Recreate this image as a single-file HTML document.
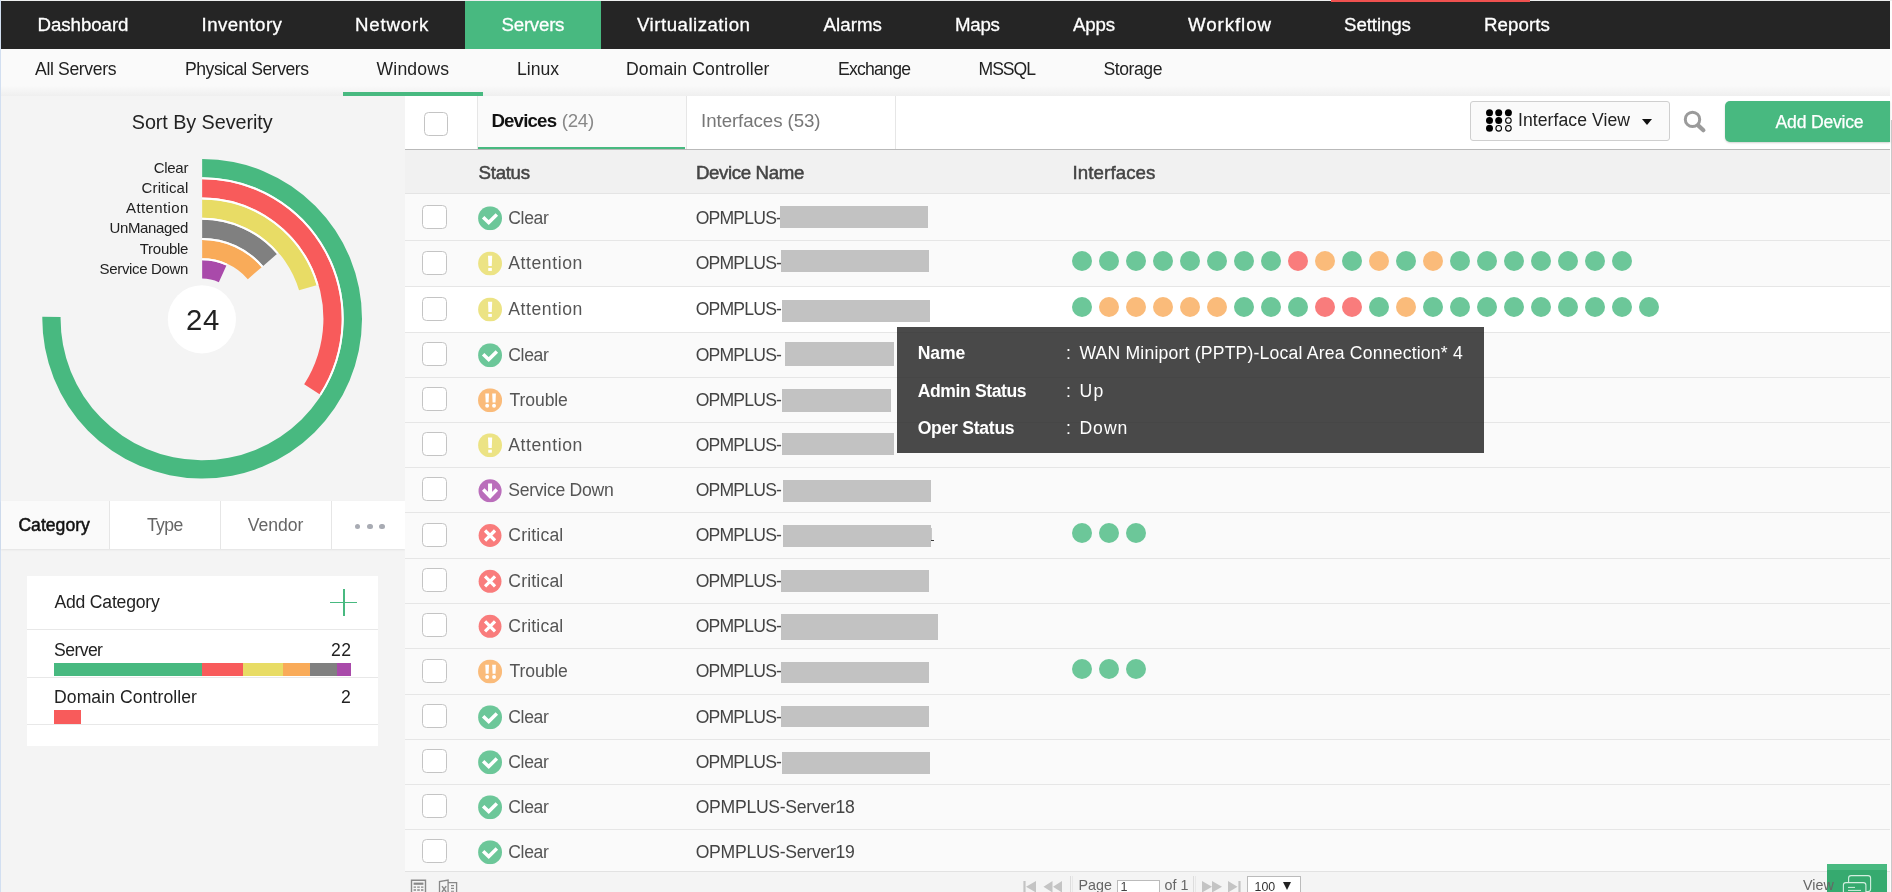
<!DOCTYPE html>
<html lang="en"><head><meta charset="utf-8"><title>OpManager - Servers - Windows</title>
<style>
html,body{margin:0;padding:0;background:#f4f4f4;}
body{width:1892px;height:892px;position:relative;overflow:hidden;font-family:'Liberation Sans',sans-serif;}
.b{position:absolute;display:block}
.t{position:absolute;display:block;white-space:pre;line-height:24px;height:24px;font-family:'Liberation Sans',sans-serif;}
#tx,#ov{position:absolute;left:0;top:0;width:1892px;height:892px;will-change:transform}
</style></head><body>
<div class="b" style="left:0.00px;top:0.00px;width:1892.00px;height:892.00px;background:#f4f4f4;"></div>
<div class="b" style="left:0.00px;top:0.00px;width:1.00px;height:892.00px;background:#d2dff1;"></div>
<div class="b" style="left:1890.00px;top:0.00px;width:2.00px;height:892.00px;background:#fdfdfd;"></div>
<div class="b" style="left:1891.00px;top:120.00px;width:1.00px;height:772.00px;background:#c9c9c9;"></div>
<div class="b" style="left:1.00px;top:1.00px;width:1889.00px;height:48.00px;background:#252525;"></div>
<div class="b" style="left:1.00px;top:0.00px;width:1891.00px;height:1.00px;background:#eef0f0;"></div>
<div class="b" style="left:1331.00px;top:0.00px;width:199.00px;height:1.50px;background:#f0514f;"></div>
<div class="b" style="left:465.00px;top:1.00px;width:136.00px;height:48.00px;background:#48b980;"></div>
<div class="b" style="left:1.00px;top:49.00px;width:1889.00px;height:47.00px;background:#fafafa;background:linear-gradient(#fafafa 0,#fafafa 78%,#efefef 100%);"></div>
<div class="b" style="left:343.00px;top:92.00px;width:140.00px;height:4.00px;background:#48b980;"></div>
<div class="b" style="left:1.00px;top:96.00px;width:404.00px;height:796.00px;background:#f4f4f4;"></div>
<svg class="b" style="left:0;top:96px" width="405" height="400" viewBox="0 96 405 400"><path d="M202.15 158.90A159.85 159.85 0 1 1 42.31 316.80L60.61 317.02A141.55 141.55 0 1 0 202.15 177.20Z" fill="#48b980"/><path d="M202.15 179.18A139.57 139.57 0 0 1 319.56 394.21L304.17 384.31A121.27 121.27 0 0 0 202.15 197.48Z" fill="#f85b5b"/><path d="M202.15 178.19A140.56 140.56 0 0 1 320.40 394.74" fill="none" stroke="#fff" stroke-width="1.9"/><path d="M202.15 199.46A119.29 119.29 0 0 1 316.61 285.14L299.05 290.30A100.99 100.99 0 0 0 202.15 217.76Z" fill="#e8dc65"/><path d="M202.15 198.47A120.28 120.28 0 0 1 317.56 284.86" fill="none" stroke="#fff" stroke-width="1.9"/><path d="M202.15 219.74A99.01 99.01 0 0 1 276.98 253.91L263.15 265.90A80.71 80.71 0 0 0 202.15 238.04Z" fill="#808080"/><path d="M202.15 218.75A100.00 100.00 0 0 1 277.72 253.26" fill="none" stroke="#fff" stroke-width="1.9"/><path d="M202.15 240.02A78.73 78.73 0 0 1 261.65 267.19L247.82 279.18A60.43 60.43 0 0 0 202.15 258.32Z" fill="#f9ab59"/><path d="M202.15 239.03A79.72 79.72 0 0 1 262.40 266.54" fill="none" stroke="#fff" stroke-width="1.9"/><path d="M202.15 260.30A58.45 58.45 0 0 1 226.43 265.58L218.83 282.23A40.15 40.15 0 0 0 202.15 278.60Z" fill="#a94aaa"/><path d="M202.15 259.31A59.44 59.44 0 0 1 226.84 264.68" fill="none" stroke="#fff" stroke-width="1.9"/><circle cx="201.9" cy="319.3" r="34.1" fill="#fff"/></svg>
<div class="b" style="left:1.00px;top:501.00px;width:404.00px;height:48.00px;background:#fff;box-shadow:0 1px 2px rgba(0,0,0,.07);"></div>
<div class="b" style="left:1.00px;top:501.00px;width:109.00px;height:48.00px;background:#fafafa;"></div>
<div class="b" style="left:109.30px;top:501.00px;width:1.00px;height:48.00px;background:#e6e6e6;"></div>
<div class="b" style="left:220.00px;top:501.00px;width:1.00px;height:48.00px;background:#e6e6e6;"></div>
<div class="b" style="left:331.00px;top:501.00px;width:1.00px;height:48.00px;background:#e6e6e6;"></div>
<div class="b" style="left:354.6px;top:523.6px;width:5.8px;height:5.8px;border-radius:50%;background:#a8abb3"></div>
<div class="b" style="left:367.0px;top:523.6px;width:5.8px;height:5.8px;border-radius:50%;background:#a8abb3"></div>
<div class="b" style="left:379.4px;top:523.6px;width:5.8px;height:5.8px;border-radius:50%;background:#a8abb3"></div>
<div class="b" style="left:27.00px;top:576.00px;width:351.00px;height:170.00px;background:#fff;"></div>
<div class="b" style="left:27.00px;top:629.00px;width:351.00px;height:1.00px;background:#e8e8e8;"></div>
<div class="b" style="left:27.00px;top:677.00px;width:351.00px;height:1.00px;background:#e8e8e8;"></div>
<div class="b" style="left:27.00px;top:724.00px;width:351.00px;height:1.00px;background:#e8e8e8;"></div>
<div class="b" style="left:330.30px;top:602.00px;width:26.80px;height:1.20px;background:#48b980;"></div>
<div class="b" style="left:343.40px;top:589.00px;width:1.60px;height:27.00px;background:#48b980;"></div>
<div class="b" style="left:54.00px;top:663.00px;width:147.90px;height:12.80px;background:#48b980;"></div>
<div class="b" style="left:201.90px;top:663.00px;width:40.90px;height:12.80px;background:#f85b5b;"></div>
<div class="b" style="left:242.80px;top:663.00px;width:40.10px;height:12.80px;background:#e8dc65;"></div>
<div class="b" style="left:282.90px;top:663.00px;width:27.00px;height:12.80px;background:#f9ab59;"></div>
<div class="b" style="left:309.90px;top:663.00px;width:27.00px;height:12.80px;background:#808080;"></div>
<div class="b" style="left:336.90px;top:663.00px;width:14.10px;height:12.80px;background:#a94aaa;"></div>
<div class="b" style="left:54.00px;top:710.00px;width:27.00px;height:13.80px;background:#f85b5b;"></div>
<div class="b" style="left:405.00px;top:96.00px;width:1485.00px;height:796.00px;background:#fafafa;"></div>
<div class="b" style="left:405.00px;top:96.00px;width:1485.00px;height:53.00px;background:#fff;"></div>
<div class="b" style="left:405.00px;top:149.00px;width:1485.00px;height:1.00px;background:#b9b9b9;"></div>
<div class="b" style="left:476.50px;top:96.00px;width:1.00px;height:53.00px;background:#e6e6e6;"></div>
<div class="b" style="left:477.50px;top:96.00px;width:208.00px;height:53.00px;background:#fafafa;"></div>
<div class="b" style="left:477.50px;top:147.00px;width:207.50px;height:2.40px;background:#48b980;"></div>
<div class="b" style="left:685.50px;top:96.00px;width:1.00px;height:53.00px;background:#e6e6e6;"></div>
<div class="b" style="left:895.00px;top:96.00px;width:1.00px;height:53.00px;background:#e6e6e6;"></div>
<div class="b" style="left:424.2px;top:112.2px;width:23.5px;height:23.5px;box-sizing:border-box;border:1px solid #c4c4c4;border-radius:4.5px;background:#fff"></div>
<div class="b" style="left:1470px;top:101px;width:200px;height:40px;box-sizing:border-box;border:1px solid #cfcfcf;border-radius:3px;background:#fafafa"></div>
<div class="b" style="left:1642px;top:119.3px;width:0;height:0;border-left:5.7px solid transparent;border-right:5.7px solid transparent;border-top:6.6px solid #111"></div>
<div class="b" style="left:1725px;top:101px;width:165px;height:41px;border-radius:5px 0 0 5px;background:#48b980;box-shadow:0 1px 2px rgba(0,0,0,.18)"></div>
<div class="b" style="left:405.00px;top:150.00px;width:1485.00px;height:43.00px;background:#f1f1f1;"></div>
<div class="b" style="left:405.00px;top:193.00px;width:1485.00px;height:1.00px;background:#e4e4e4;"></div>
<div class="b" style="left:405.00px;top:287.00px;width:1485.00px;height:45.00px;background:#fff;"></div>
<div class="b" style="left:405.00px;top:240.00px;width:1485.00px;height:1.00px;background:#e6e6e6;"></div>
<div class="b" style="left:405.00px;top:286.00px;width:1485.00px;height:1.00px;background:#e6e6e6;"></div>
<div class="b" style="left:405.00px;top:332.00px;width:1485.00px;height:1.00px;background:#e6e6e6;"></div>
<div class="b" style="left:405.00px;top:377.00px;width:1485.00px;height:1.00px;background:#e6e6e6;"></div>
<div class="b" style="left:405.00px;top:422.00px;width:1485.00px;height:1.00px;background:#e6e6e6;"></div>
<div class="b" style="left:405.00px;top:467.00px;width:1485.00px;height:1.00px;background:#e6e6e6;"></div>
<div class="b" style="left:405.00px;top:512.00px;width:1485.00px;height:1.00px;background:#e6e6e6;"></div>
<div class="b" style="left:405.00px;top:558.00px;width:1485.00px;height:1.00px;background:#e6e6e6;"></div>
<div class="b" style="left:405.00px;top:603.00px;width:1485.00px;height:1.00px;background:#e6e6e6;"></div>
<div class="b" style="left:405.00px;top:648.00px;width:1485.00px;height:1.00px;background:#e6e6e6;"></div>
<div class="b" style="left:405.00px;top:694.00px;width:1485.00px;height:1.00px;background:#e6e6e6;"></div>
<div class="b" style="left:405.00px;top:739.00px;width:1485.00px;height:1.00px;background:#e6e6e6;"></div>
<div class="b" style="left:405.00px;top:784.00px;width:1485.00px;height:1.00px;background:#e6e6e6;"></div>
<div class="b" style="left:405.00px;top:829.00px;width:1485.00px;height:1.00px;background:#e6e6e6;"></div>
<div class="b" style="left:422.2px;top:205.1px;width:24.4px;height:24.4px;box-sizing:border-box;border:1px solid #c4c4c4;border-radius:4.5px;background:#fff"></div>
<div class="b" style="left:422.2px;top:250.6px;width:24.4px;height:24.4px;box-sizing:border-box;border:1px solid #c4c4c4;border-radius:4.5px;background:#fff"></div>
<div class="b" style="left:422.2px;top:296.6px;width:24.4px;height:24.4px;box-sizing:border-box;border:1px solid #c4c4c4;border-radius:4.5px;background:#fff"></div>
<div class="b" style="left:422.2px;top:342.1px;width:24.4px;height:24.4px;box-sizing:border-box;border:1px solid #c4c4c4;border-radius:4.5px;background:#fff"></div>
<div class="b" style="left:422.2px;top:387.1px;width:24.4px;height:24.4px;box-sizing:border-box;border:1px solid #c4c4c4;border-radius:4.5px;background:#fff"></div>
<div class="b" style="left:422.2px;top:432.1px;width:24.4px;height:24.4px;box-sizing:border-box;border:1px solid #c4c4c4;border-radius:4.5px;background:#fff"></div>
<div class="b" style="left:422.2px;top:477.1px;width:24.4px;height:24.4px;box-sizing:border-box;border:1px solid #c4c4c4;border-radius:4.5px;background:#fff"></div>
<div class="b" style="left:422.2px;top:522.6px;width:24.4px;height:24.4px;box-sizing:border-box;border:1px solid #c4c4c4;border-radius:4.5px;background:#fff"></div>
<div class="b" style="left:931.00px;top:528.00px;width:1.00px;height:11.50px;background:#c8c8c8;"></div>
<div class="b" style="left:931.00px;top:540.00px;width:3.00px;height:1.40px;background:#3c3c3c;"></div>
<div class="b" style="left:422.2px;top:568.1px;width:24.4px;height:24.4px;box-sizing:border-box;border:1px solid #c4c4c4;border-radius:4.5px;background:#fff"></div>
<div class="b" style="left:422.2px;top:613.1px;width:24.4px;height:24.4px;box-sizing:border-box;border:1px solid #c4c4c4;border-radius:4.5px;background:#fff"></div>
<div class="b" style="left:422.2px;top:658.6px;width:24.4px;height:24.4px;box-sizing:border-box;border:1px solid #c4c4c4;border-radius:4.5px;background:#fff"></div>
<div class="b" style="left:422.2px;top:704.1px;width:24.4px;height:24.4px;box-sizing:border-box;border:1px solid #c4c4c4;border-radius:4.5px;background:#fff"></div>
<div class="b" style="left:422.2px;top:749.1px;width:24.4px;height:24.4px;box-sizing:border-box;border:1px solid #c4c4c4;border-radius:4.5px;background:#fff"></div>
<div class="b" style="left:422.2px;top:794.1px;width:24.4px;height:24.4px;box-sizing:border-box;border:1px solid #c4c4c4;border-radius:4.5px;background:#fff"></div>
<div class="b" style="left:422.2px;top:839.1px;width:24.4px;height:24.4px;box-sizing:border-box;border:1px solid #c4c4c4;border-radius:4.5px;background:#fff"></div>
<div class="b" style="left:1072.0px;top:251.2px;width:20px;height:20px;border-radius:50%;background:#6cc799"></div>
<div class="b" style="left:1099.0px;top:251.2px;width:20px;height:20px;border-radius:50%;background:#6cc799"></div>
<div class="b" style="left:1126.0px;top:251.2px;width:20px;height:20px;border-radius:50%;background:#6cc799"></div>
<div class="b" style="left:1153.0px;top:251.2px;width:20px;height:20px;border-radius:50%;background:#6cc799"></div>
<div class="b" style="left:1180.0px;top:251.2px;width:20px;height:20px;border-radius:50%;background:#6cc799"></div>
<div class="b" style="left:1207.0px;top:251.2px;width:20px;height:20px;border-radius:50%;background:#6cc799"></div>
<div class="b" style="left:1234.0px;top:251.2px;width:20px;height:20px;border-radius:50%;background:#6cc799"></div>
<div class="b" style="left:1261.0px;top:251.2px;width:20px;height:20px;border-radius:50%;background:#6cc799"></div>
<div class="b" style="left:1288.0px;top:251.2px;width:20px;height:20px;border-radius:50%;background:#f97c7c"></div>
<div class="b" style="left:1315.0px;top:251.2px;width:20px;height:20px;border-radius:50%;background:#fabb7a"></div>
<div class="b" style="left:1342.0px;top:251.2px;width:20px;height:20px;border-radius:50%;background:#6cc799"></div>
<div class="b" style="left:1369.0px;top:251.2px;width:20px;height:20px;border-radius:50%;background:#fabb7a"></div>
<div class="b" style="left:1396.0px;top:251.2px;width:20px;height:20px;border-radius:50%;background:#6cc799"></div>
<div class="b" style="left:1423.0px;top:251.2px;width:20px;height:20px;border-radius:50%;background:#fabb7a"></div>
<div class="b" style="left:1450.0px;top:251.2px;width:20px;height:20px;border-radius:50%;background:#6cc799"></div>
<div class="b" style="left:1477.0px;top:251.2px;width:20px;height:20px;border-radius:50%;background:#6cc799"></div>
<div class="b" style="left:1504.0px;top:251.2px;width:20px;height:20px;border-radius:50%;background:#6cc799"></div>
<div class="b" style="left:1531.0px;top:251.2px;width:20px;height:20px;border-radius:50%;background:#6cc799"></div>
<div class="b" style="left:1558.0px;top:251.2px;width:20px;height:20px;border-radius:50%;background:#6cc799"></div>
<div class="b" style="left:1585.0px;top:251.2px;width:20px;height:20px;border-radius:50%;background:#6cc799"></div>
<div class="b" style="left:1612.0px;top:251.2px;width:20px;height:20px;border-radius:50%;background:#6cc799"></div>
<div class="b" style="left:1072.0px;top:297.2px;width:20px;height:20px;border-radius:50%;background:#6cc799"></div>
<div class="b" style="left:1099.0px;top:297.2px;width:20px;height:20px;border-radius:50%;background:#fabb7a"></div>
<div class="b" style="left:1126.0px;top:297.2px;width:20px;height:20px;border-radius:50%;background:#fabb7a"></div>
<div class="b" style="left:1153.0px;top:297.2px;width:20px;height:20px;border-radius:50%;background:#fabb7a"></div>
<div class="b" style="left:1180.0px;top:297.2px;width:20px;height:20px;border-radius:50%;background:#fabb7a"></div>
<div class="b" style="left:1207.0px;top:297.2px;width:20px;height:20px;border-radius:50%;background:#fabb7a"></div>
<div class="b" style="left:1234.0px;top:297.2px;width:20px;height:20px;border-radius:50%;background:#6cc799"></div>
<div class="b" style="left:1261.0px;top:297.2px;width:20px;height:20px;border-radius:50%;background:#6cc799"></div>
<div class="b" style="left:1288.0px;top:297.2px;width:20px;height:20px;border-radius:50%;background:#6cc799"></div>
<div class="b" style="left:1315.0px;top:297.2px;width:20px;height:20px;border-radius:50%;background:#f97c7c"></div>
<div class="b" style="left:1342.0px;top:297.2px;width:20px;height:20px;border-radius:50%;background:#f97c7c"></div>
<div class="b" style="left:1369.0px;top:297.2px;width:20px;height:20px;border-radius:50%;background:#6cc799"></div>
<div class="b" style="left:1396.0px;top:297.2px;width:20px;height:20px;border-radius:50%;background:#fabb7a"></div>
<div class="b" style="left:1423.0px;top:297.2px;width:20px;height:20px;border-radius:50%;background:#6cc799"></div>
<div class="b" style="left:1450.0px;top:297.2px;width:20px;height:20px;border-radius:50%;background:#6cc799"></div>
<div class="b" style="left:1477.0px;top:297.2px;width:20px;height:20px;border-radius:50%;background:#6cc799"></div>
<div class="b" style="left:1504.0px;top:297.2px;width:20px;height:20px;border-radius:50%;background:#6cc799"></div>
<div class="b" style="left:1531.0px;top:297.2px;width:20px;height:20px;border-radius:50%;background:#6cc799"></div>
<div class="b" style="left:1558.0px;top:297.2px;width:20px;height:20px;border-radius:50%;background:#6cc799"></div>
<div class="b" style="left:1585.0px;top:297.2px;width:20px;height:20px;border-radius:50%;background:#6cc799"></div>
<div class="b" style="left:1612.0px;top:297.2px;width:20px;height:20px;border-radius:50%;background:#6cc799"></div>
<div class="b" style="left:1639.0px;top:297.2px;width:20px;height:20px;border-radius:50%;background:#6cc799"></div>
<div class="b" style="left:1072.0px;top:523.2px;width:20px;height:20px;border-radius:50%;background:#6cc799"></div>
<div class="b" style="left:1099.0px;top:523.2px;width:20px;height:20px;border-radius:50%;background:#6cc799"></div>
<div class="b" style="left:1126.0px;top:523.2px;width:20px;height:20px;border-radius:50%;background:#6cc799"></div>
<div class="b" style="left:1072.0px;top:659.2px;width:20px;height:20px;border-radius:50%;background:#6cc799"></div>
<div class="b" style="left:1099.0px;top:659.2px;width:20px;height:20px;border-radius:50%;background:#6cc799"></div>
<div class="b" style="left:1126.0px;top:659.2px;width:20px;height:20px;border-radius:50%;background:#6cc799"></div>
<div class="b" style="left:405.00px;top:871.00px;width:1485.00px;height:21.00px;background:#f4f4f4;"></div>
<div class="b" style="left:405.00px;top:870.50px;width:1485.00px;height:1.00px;background:#e2e2e2;"></div>
<div class="b" style="left:1070.00px;top:876.00px;width:1.00px;height:16.00px;background:#ddd;"></div>
<div class="b" style="left:1071.50px;top:876.00px;width:1.00px;height:16.00px;background:#e8e8e8;"></div>
<div class="b" style="left:1117px;top:879.5px;width:43px;height:16px;box-sizing:border-box;border:1px solid #bbb;background:#fff"></div>
<div class="b" style="left:1193.00px;top:876.00px;width:1.00px;height:16.00px;background:#ddd;"></div>
<div class="b" style="left:1194.50px;top:876.00px;width:1.00px;height:16.00px;background:#e8e8e8;"></div>
<div class="b" style="left:1247px;top:875.5px;width:54px;height:20px;box-sizing:border-box;border:1px solid #bbb;background:#fff"></div>
<div class="b" style="left:1282.5px;top:882.2px;width:0;height:0;border-left:4.5px solid transparent;border-right:4.5px solid transparent;border-top:8.5px solid #222"></div>
<div class="b" style="left:1827.00px;top:864.00px;width:60.00px;height:28.00px;background:#36aa6f;"></div>
<div class="b" style="left:1827.00px;top:864.00px;width:60.00px;height:6.00px;background:#48b980;"></div>
<svg class="b" style="left:0;top:0" width="1892" height="892" viewBox="0 0 1892 892">
<svg x="1484" y="107" width="30" height="27" viewBox="1484 107 30 27"><circle cx="1489.5" cy="112.7" r="3.5" fill="#000"/><circle cx="1498.7" cy="112.7" r="3.5" fill="#000"/><circle cx="1508.4" cy="112.7" r="3.5" fill="#000"/><circle cx="1489.5" cy="120.5" r="3.5" fill="#000"/><circle cx="1498.7" cy="120.5" r="3.5" fill="#000"/><circle cx="1508.4" cy="120.5" r="2.8" fill="none" stroke="#000" stroke-width="1.1"/><circle cx="1489.5" cy="128.3" r="3.5" fill="#000"/><circle cx="1498.7" cy="128.3" r="2.8" fill="none" stroke="#000" stroke-width="1.1"/><circle cx="1508.4" cy="128.3" r="2.8" fill="none" stroke="#000" stroke-width="1.1"/></svg>
<svg x="1680" y="106" width="30" height="30" viewBox="1680 106 30 30"><circle cx="1692.5" cy="119.4" r="7.2" fill="none" stroke="#9b9b9b" stroke-width="3"/><path d="M1698.4 125.6L1703.4 130.2" stroke="#9b9b9b" stroke-width="4.2" stroke-linecap="round"/></svg>
<svg x="478.05" y="206.30" width="24" height="24" viewBox="0 0 24 24"><circle cx="12" cy="12" r="11.95" fill="#6cc799"/><path d="M5.1 11.05L10.65 16.3L18.8 8.2" fill="none" stroke="#fff" stroke-width="3.5" stroke-linejoin="miter"/></svg>
<svg x="478.05" y="251.50" width="24" height="24" viewBox="0 0 24 24"><circle cx="12" cy="12" r="11.95" fill="#ece384"/><path d="M9.95 4.3h4.2l-.45 10.3h-3.3z" fill="#fff"/><rect x="10.2" y="16.4" width="3.6" height="3" fill="#fff"/></svg>
<svg x="478.05" y="297.50" width="24" height="24" viewBox="0 0 24 24"><circle cx="12" cy="12" r="11.95" fill="#ece384"/><path d="M9.95 4.3h4.2l-.45 10.3h-3.3z" fill="#fff"/><rect x="10.2" y="16.4" width="3.6" height="3" fill="#fff"/></svg>
<svg x="478.05" y="343.30" width="24" height="24" viewBox="0 0 24 24"><circle cx="12" cy="12" r="11.95" fill="#6cc799"/><path d="M5.1 11.05L10.65 16.3L18.8 8.2" fill="none" stroke="#fff" stroke-width="3.5" stroke-linejoin="miter"/></svg>
<svg x="478.05" y="388.30" width="24" height="24" viewBox="0 0 24 24"><circle cx="12" cy="12" r="12.05" fill="#fabb7a"/><path d="M7.25 5.2h3.7l-.4 9h-2.9z" fill="#fff"/><circle cx="9.1" cy="17.5" r="1.95" fill="#fff"/><path d="M14.15 5.2h3.7l-.4 9h-2.9z" fill="#fff"/><circle cx="16" cy="17.5" r="1.95" fill="#fff"/></svg>
<svg x="478.05" y="433.30" width="24" height="24" viewBox="0 0 24 24"><circle cx="12" cy="12" r="11.95" fill="#ece384"/><path d="M9.95 4.3h4.2l-.45 10.3h-3.3z" fill="#fff"/><rect x="10.2" y="16.4" width="3.6" height="3" fill="#fff"/></svg>
<svg x="478.05" y="478.30" width="24" height="24" viewBox="0 0 24 24"><circle cx="12" cy="12.6" r="11.55" fill="#ba6ebb"/><path d="M12 5.1V16" fill="none" stroke="#fff" stroke-width="4"/><path d="M5.2 11.3L12 18.15L18.8 11.3" fill="none" stroke="#fff" stroke-width="3.5" stroke-linejoin="miter"/></svg>
<svg x="478.05" y="523.50" width="24" height="24" viewBox="0 0 24 24"><circle cx="12" cy="12" r="11.45" fill="#f97c7c"/><path d="M7 7L17 17M17 7L7 17" fill="none" stroke="#fff" stroke-width="3.2"/></svg>
<svg x="478.05" y="569.30" width="24" height="24" viewBox="0 0 24 24"><circle cx="12" cy="12" r="11.45" fill="#f97c7c"/><path d="M7 7L17 17M17 7L7 17" fill="none" stroke="#fff" stroke-width="3.2"/></svg>
<svg x="478.05" y="614.30" width="24" height="24" viewBox="0 0 24 24"><circle cx="12" cy="12" r="11.45" fill="#f97c7c"/><path d="M7 7L17 17M17 7L7 17" fill="none" stroke="#fff" stroke-width="3.2"/></svg>
<svg x="478.05" y="659.50" width="24" height="24" viewBox="0 0 24 24"><circle cx="12" cy="12" r="12.05" fill="#fabb7a"/><path d="M7.25 5.2h3.7l-.4 9h-2.9z" fill="#fff"/><circle cx="9.1" cy="17.5" r="1.95" fill="#fff"/><path d="M14.15 5.2h3.7l-.4 9h-2.9z" fill="#fff"/><circle cx="16" cy="17.5" r="1.95" fill="#fff"/></svg>
<svg x="478.05" y="705.30" width="24" height="24" viewBox="0 0 24 24"><circle cx="12" cy="12" r="11.95" fill="#6cc799"/><path d="M5.1 11.05L10.65 16.3L18.8 8.2" fill="none" stroke="#fff" stroke-width="3.5" stroke-linejoin="miter"/></svg>
<svg x="478.05" y="750.30" width="24" height="24" viewBox="0 0 24 24"><circle cx="12" cy="12" r="11.95" fill="#6cc799"/><path d="M5.1 11.05L10.65 16.3L18.8 8.2" fill="none" stroke="#fff" stroke-width="3.5" stroke-linejoin="miter"/></svg>
<svg x="478.05" y="795.30" width="24" height="24" viewBox="0 0 24 24"><circle cx="12" cy="12" r="11.95" fill="#6cc799"/><path d="M5.1 11.05L10.65 16.3L18.8 8.2" fill="none" stroke="#fff" stroke-width="3.5" stroke-linejoin="miter"/></svg>
<svg x="478.05" y="840.30" width="24" height="24" viewBox="0 0 24 24"><circle cx="12" cy="12" r="11.95" fill="#6cc799"/><path d="M5.1 11.05L10.65 16.3L18.8 8.2" fill="none" stroke="#fff" stroke-width="3.5" stroke-linejoin="miter"/></svg>
<svg x="410" y="877" width="50" height="15" viewBox="0 0 50 15"><path d="M1.5 15V3.2h14V15" fill="none" stroke="#888" stroke-width="1.4"/><rect x="3.6" y="5.6" width="9.8" height="2.2" fill="#888"/><path d="M3.6 10.2h2.4M7.2 10.2h2.6M11 10.2h2.4M3.6 13h2.4M7.2 13h2.6M11 13h2.4" stroke="#888" stroke-width="1.3"/><path d="M29.5 15V4.6l8.6-1.6V15M38 5.6h8.6V15" fill="none" stroke="#888" stroke-width="1.3"/><path d="M32 9.2l4.2 5.8M36.2 9.2L32 15" stroke="#888" stroke-width="1.4"/><path d="M41 8.6h3M41 11.4h3M41 14.2h3" stroke="#888" stroke-width="1.1"/></svg>
<svg x="1020" y="876.5" width="50" height="16" viewBox="0 0 50 16"><path d="M4.5 4.5v11.5" stroke="#c4c4c4" stroke-width="2.2"/><path d="M16 4.5v11.5L6 10.3zM32.5 4.5v11.5L23.5 10.3zM42 4.5v11.5L33 10.3z" fill="#c4c4c4"/></svg>
<svg x="1198" y="876.5" width="50" height="16" viewBox="0 0 50 16"><path d="M4 4.5v11.5l10-5.7zM14 4.5v11.5l10-5.7zM30 4.5v11.5l9.5-5.7z" fill="#c4c4c4"/><path d="M41.5 4.5v11.5" stroke="#c4c4c4" stroke-width="2.2"/></svg>
<svg x="1840" y="872" width="36" height="20" viewBox="0 0 36 20"><rect x="8.6" y="3.6" width="22" height="16" rx="2.5" fill="#36aa6f" stroke="#d4efe0" stroke-width="1.1"/><rect x="3.4" y="10.6" width="22.5" height="14" rx="2.5" fill="#36aa6f" stroke="#d4efe0" stroke-width="1.1"/><path d="M8 15.4h7M8 18.4h13" stroke="#d4efe0" stroke-width="1"/></svg>
</svg>
<div id="tx">
<span class="t" style="left:37.50px;top:13px;font-size:18.70px;letter-spacing:-0.061px;color:#fff;font-weight:400;-webkit-text-stroke:0.3px #fff;">Dashboard</span>
<span class="t" style="left:201.50px;top:13px;font-size:18.70px;letter-spacing:0.448px;color:#fff;font-weight:400;-webkit-text-stroke:0.3px #fff;">Inventory</span>
<span class="t" style="left:355.00px;top:13px;font-size:18.70px;letter-spacing:0.819px;color:#fff;font-weight:400;-webkit-text-stroke:0.3px #fff;">Network</span>
<span class="t" style="left:501.50px;top:13px;font-size:18.70px;letter-spacing:-0.238px;color:#fff;font-weight:400;-webkit-text-stroke:0.3px #fff;">Servers</span>
<span class="t" style="left:637.00px;top:13px;font-size:18.70px;letter-spacing:0.483px;color:#fff;font-weight:400;-webkit-text-stroke:0.3px #fff;">Virtualization</span>
<span class="t" style="left:823.50px;top:13px;font-size:18.70px;letter-spacing:0.063px;color:#fff;font-weight:400;-webkit-text-stroke:0.3px #fff;">Alarms</span>
<span class="t" style="left:955.00px;top:13px;font-size:18.70px;letter-spacing:-0.243px;color:#fff;font-weight:400;-webkit-text-stroke:0.3px #fff;">Maps</span>
<span class="t" style="left:1073.00px;top:13px;font-size:18.70px;letter-spacing:-0.208px;color:#fff;font-weight:400;-webkit-text-stroke:0.3px #fff;">Apps</span>
<span class="t" style="left:1188.00px;top:13px;font-size:18.70px;letter-spacing:0.922px;color:#fff;font-weight:400;-webkit-text-stroke:0.3px #fff;">Workflow</span>
<span class="t" style="left:1344.00px;top:13px;font-size:18.70px;letter-spacing:-0.081px;color:#fff;font-weight:400;-webkit-text-stroke:0.3px #fff;">Settings</span>
<span class="t" style="left:1484.00px;top:13px;font-size:18.70px;letter-spacing:0.087px;color:#fff;font-weight:400;-webkit-text-stroke:0.3px #fff;">Reports</span>
<span class="t" style="left:35.00px;top:57px;font-size:17.60px;letter-spacing:-0.359px;color:#222;font-weight:400;">All Servers</span>
<span class="t" style="left:185.00px;top:57px;font-size:17.60px;letter-spacing:-0.471px;color:#222;font-weight:400;">Physical Servers</span>
<span class="t" style="left:376.50px;top:57px;font-size:17.60px;letter-spacing:0.184px;color:#222;font-weight:400;">Windows</span>
<span class="t" style="left:517.00px;top:57px;font-size:17.60px;letter-spacing:-0.019px;color:#222;font-weight:400;">Linux</span>
<span class="t" style="left:626.00px;top:57px;font-size:17.60px;letter-spacing:0.104px;color:#222;font-weight:400;">Domain Controller</span>
<span class="t" style="left:838.00px;top:57px;font-size:17.60px;letter-spacing:-0.755px;color:#222;font-weight:400;">Exchange</span>
<span class="t" style="left:978.50px;top:57px;font-size:17.60px;letter-spacing:-1.030px;color:#222;font-weight:400;">MSSQL</span>
<span class="t" style="left:1103.50px;top:57px;font-size:17.60px;letter-spacing:-0.441px;color:#222;font-weight:400;">Storage</span>
<span class="t" style="left:131.80px;top:110px;font-size:19.80px;letter-spacing:-0.070px;color:#222;font-weight:400;">Sort By Severity</span>
<span class="t" style="left:185.90px;top:308px;font-size:29.30px;letter-spacing:0.908px;color:#222;font-weight:400;">24</span>
<span class="t" style="left:153.70px;top:156px;font-size:15.00px;letter-spacing:-0.287px;color:#222;font-weight:400;">Clear</span>
<span class="t" style="left:141.50px;top:176px;font-size:15.00px;letter-spacing:0.152px;color:#222;font-weight:400;">Critical</span>
<span class="t" style="left:126.00px;top:196px;font-size:15.00px;letter-spacing:0.399px;color:#222;font-weight:400;">Attention</span>
<span class="t" style="left:109.40px;top:216px;font-size:15.00px;letter-spacing:-0.341px;color:#222;font-weight:400;">UnManaged</span>
<span class="t" style="left:139.80px;top:237px;font-size:15.00px;letter-spacing:-0.284px;color:#222;font-weight:400;">Trouble</span>
<span class="t" style="left:99.60px;top:257px;font-size:15.00px;letter-spacing:-0.340px;color:#222;font-weight:400;">Service Down</span>
<span class="t" style="left:18.40px;top:513px;font-size:17.60px;letter-spacing:0.012px;color:#111;font-weight:400;-webkit-text-stroke:0.5px #111;">Category</span>
<span class="t" style="left:147.00px;top:513px;font-size:17.60px;letter-spacing:-0.653px;color:#666;font-weight:400;">Type</span>
<span class="t" style="left:247.70px;top:513px;font-size:17.60px;letter-spacing:-0.037px;color:#666;font-weight:400;">Vendor</span>
<span class="t" style="left:54.50px;top:590px;font-size:17.60px;letter-spacing:-0.211px;color:#222;font-weight:400;">Add Category</span>
<span class="t" style="left:54.00px;top:638px;font-size:17.60px;letter-spacing:-0.568px;color:#222;font-weight:400;">Server</span>
<span class="t" style="left:331.00px;top:638px;font-size:17.60px;letter-spacing:0.423px;color:#222;font-weight:400;">22</span>
<span class="t" style="left:54.00px;top:685px;font-size:17.60px;letter-spacing:0.073px;color:#222;font-weight:400;">Domain Controller</span>
<span class="t" style="left:341.00px;top:685px;font-size:17.60px;letter-spacing:0.000px;color:#222;font-weight:400;">2</span>
<span class="t" style="left:491.40px;top:109px;font-size:18.70px;letter-spacing:-0.834px;color:#111;font-weight:700;">Devices</span>
<span class="t" style="left:561.80px;top:109px;font-size:18.70px;letter-spacing:-0.286px;color:#888;font-weight:400;">(24)</span>
<span class="t" style="left:701.10px;top:109px;font-size:18.70px;letter-spacing:-0.076px;color:#777;font-weight:400;">Interfaces (53)</span>
<span class="t" style="left:1518.00px;top:108px;font-size:17.60px;letter-spacing:0.061px;color:#222;font-weight:400;">Interface View</span>
<span class="t" style="left:1775.60px;top:110px;font-size:17.60px;letter-spacing:-0.223px;color:#fff;font-weight:400;-webkit-text-stroke:0.25px #fff;">Add Device</span>
<span class="t" style="left:478.60px;top:161px;font-size:18.70px;letter-spacing:-0.303px;color:#444;font-weight:400;-webkit-text-stroke:0.5px #444;">Status</span>
<span class="t" style="left:695.90px;top:161px;font-size:18.70px;letter-spacing:-0.374px;color:#444;font-weight:400;-webkit-text-stroke:0.5px #444;">Device Name</span>
<span class="t" style="left:1072.50px;top:161px;font-size:18.70px;letter-spacing:0.098px;color:#444;font-weight:400;-webkit-text-stroke:0.5px #444;">Interfaces</span>
<span class="t" style="left:508.30px;top:206px;font-size:17.60px;letter-spacing:-0.390px;color:#555;font-weight:400;">Clear</span>
<span class="t" style="left:695.70px;top:206px;font-size:17.60px;letter-spacing:-0.804px;color:#444;font-weight:400;">OPMPLUS-</span>
<span class="t" style="left:508.30px;top:251px;font-size:17.60px;letter-spacing:0.566px;color:#555;font-weight:400;">Attention</span>
<span class="t" style="left:695.70px;top:251px;font-size:17.60px;letter-spacing:-0.804px;color:#444;font-weight:400;">OPMPLUS-</span>
<span class="t" style="left:508.30px;top:297px;font-size:17.60px;letter-spacing:0.566px;color:#555;font-weight:400;">Attention</span>
<span class="t" style="left:695.70px;top:297px;font-size:17.60px;letter-spacing:-0.804px;color:#444;font-weight:400;">OPMPLUS-</span>
<span class="t" style="left:508.30px;top:343px;font-size:17.60px;letter-spacing:-0.390px;color:#555;font-weight:400;">Clear</span>
<span class="t" style="left:695.70px;top:343px;font-size:17.60px;letter-spacing:-0.804px;color:#444;font-weight:400;">OPMPLUS-</span>
<span class="t" style="left:509.60px;top:388px;font-size:17.60px;letter-spacing:-0.121px;color:#555;font-weight:400;">Trouble</span>
<span class="t" style="left:695.70px;top:388px;font-size:17.60px;letter-spacing:-0.804px;color:#444;font-weight:400;">OPMPLUS-</span>
<span class="t" style="left:508.30px;top:433px;font-size:17.60px;letter-spacing:0.566px;color:#555;font-weight:400;">Attention</span>
<span class="t" style="left:695.70px;top:433px;font-size:17.60px;letter-spacing:-0.804px;color:#444;font-weight:400;">OPMPLUS-</span>
<span class="t" style="left:508.30px;top:478px;font-size:17.60px;letter-spacing:-0.280px;color:#555;font-weight:400;">Service Down</span>
<span class="t" style="left:695.70px;top:478px;font-size:17.60px;letter-spacing:-0.804px;color:#444;font-weight:400;">OPMPLUS-</span>
<span class="t" style="left:508.30px;top:523px;font-size:17.60px;letter-spacing:0.174px;color:#555;font-weight:400;">Critical</span>
<span class="t" style="left:695.70px;top:523px;font-size:17.60px;letter-spacing:-0.804px;color:#444;font-weight:400;">OPMPLUS-</span>
<span class="t" style="left:508.30px;top:569px;font-size:17.60px;letter-spacing:0.174px;color:#555;font-weight:400;">Critical</span>
<span class="t" style="left:695.70px;top:569px;font-size:17.60px;letter-spacing:-0.804px;color:#444;font-weight:400;">OPMPLUS-</span>
<span class="t" style="left:508.30px;top:614px;font-size:17.60px;letter-spacing:0.174px;color:#555;font-weight:400;">Critical</span>
<span class="t" style="left:695.70px;top:614px;font-size:17.60px;letter-spacing:-0.804px;color:#444;font-weight:400;">OPMPLUS-</span>
<span class="t" style="left:509.60px;top:659px;font-size:17.60px;letter-spacing:-0.121px;color:#555;font-weight:400;">Trouble</span>
<span class="t" style="left:695.70px;top:659px;font-size:17.60px;letter-spacing:-0.804px;color:#444;font-weight:400;">OPMPLUS-</span>
<span class="t" style="left:508.30px;top:705px;font-size:17.60px;letter-spacing:-0.390px;color:#555;font-weight:400;">Clear</span>
<span class="t" style="left:695.70px;top:705px;font-size:17.60px;letter-spacing:-0.804px;color:#444;font-weight:400;">OPMPLUS-</span>
<span class="t" style="left:508.30px;top:750px;font-size:17.60px;letter-spacing:-0.390px;color:#555;font-weight:400;">Clear</span>
<span class="t" style="left:695.70px;top:750px;font-size:17.60px;letter-spacing:-0.804px;color:#444;font-weight:400;">OPMPLUS-</span>
<span class="t" style="left:508.30px;top:795px;font-size:17.60px;letter-spacing:-0.390px;color:#555;font-weight:400;">Clear</span>
<span class="t" style="left:695.70px;top:795px;font-size:17.60px;letter-spacing:-0.277px;color:#444;font-weight:400;">OPMPLUS-Server18</span>
<span class="t" style="left:508.30px;top:840px;font-size:17.60px;letter-spacing:-0.390px;color:#555;font-weight:400;">Clear</span>
<span class="t" style="left:695.70px;top:840px;font-size:17.60px;letter-spacing:-0.277px;color:#444;font-weight:400;">OPMPLUS-Server19</span>
<span class="t" style="left:1078.50px;top:873px;font-size:14.30px;letter-spacing:0.000px;color:#666;font-weight:400;">Page</span>
<span class="t" style="left:1120.50px;top:875px;font-size:12.60px;letter-spacing:0.000px;color:#444;font-weight:400;">1</span>
<span class="t" style="left:1164.50px;top:873px;font-size:14.30px;letter-spacing:0.000px;color:#666;font-weight:400;">of 1</span>
<span class="t" style="left:1254.50px;top:875px;font-size:12.40px;letter-spacing:0.000px;color:#333;font-weight:400;">100</span>
<span class="t" style="left:1803.00px;top:873px;font-size:14.30px;letter-spacing:0.000px;color:#666;font-weight:400;">View</span>
</div>
<div id="ov">
<div class="b" style="left:780.10px;top:205.80px;width:147.80px;height:21.90px;background:#c2c2c2;"></div>
<div class="b" style="left:781.20px;top:250.30px;width:147.80px;height:21.50px;background:#c2c2c2;"></div>
<div class="b" style="left:782.30px;top:300.10px;width:147.80px;height:21.60px;background:#c2c2c2;"></div>
<div class="b" style="left:784.80px;top:342.10px;width:109.10px;height:24.40px;background:#c2c2c2;"></div>
<div class="b" style="left:782.30px;top:389.10px;width:108.70px;height:22.60px;background:#c2c2c2;"></div>
<div class="b" style="left:782.30px;top:432.90px;width:111.60px;height:22.60px;background:#c2c2c2;"></div>
<div class="b" style="left:783.30px;top:480.30px;width:147.50px;height:21.80px;background:#c2c2c2;"></div>
<div class="b" style="left:782.90px;top:524.70px;width:147.80px;height:22.00px;background:#c2c2c2;"></div>
<div class="b" style="left:781.00px;top:569.90px;width:148.10px;height:21.70px;background:#c2c2c2;"></div>
<div class="b" style="left:781.00px;top:614.20px;width:156.90px;height:25.40px;background:#c2c2c2;"></div>
<div class="b" style="left:781.00px;top:662.20px;width:148.10px;height:21.30px;background:#c2c2c2;"></div>
<div class="b" style="left:781.00px;top:706.10px;width:148.10px;height:21.30px;background:#c2c2c2;"></div>
<div class="b" style="left:782.00px;top:751.90px;width:148.10px;height:22.00px;background:#c2c2c2;"></div>
<div class="b" style="left:897.30px;top:327.00px;width:586.50px;height:126.00px;background:rgba(34,34,34,.82);"></div>
<span class="t" style="left:917.70px;top:341px;font-size:17.60px;letter-spacing:-0.146px;color:#fff;font-weight:700;">Name</span>
<span class="t" style="left:1066.00px;top:341px;font-size:17.60px;letter-spacing:0.000px;color:#fff;font-weight:400;">:</span>
<span class="t" style="left:1079.40px;top:341px;font-size:17.60px;letter-spacing:0.198px;color:#fff;font-weight:400;">WAN Miniport (PPTP)-Local Area Connection* 4</span>
<span class="t" style="left:917.70px;top:379px;font-size:17.60px;letter-spacing:-0.403px;color:#fff;font-weight:700;">Admin Status</span>
<span class="t" style="left:1066.00px;top:379px;font-size:17.60px;letter-spacing:0.000px;color:#fff;font-weight:400;">:</span>
<span class="t" style="left:1079.40px;top:379px;font-size:17.60px;letter-spacing:1.501px;color:#fff;font-weight:400;">Up</span>
<span class="t" style="left:917.70px;top:416px;font-size:17.60px;letter-spacing:-0.276px;color:#fff;font-weight:700;">Oper Status</span>
<span class="t" style="left:1066.00px;top:416px;font-size:17.60px;letter-spacing:0.000px;color:#fff;font-weight:400;">:</span>
<span class="t" style="left:1079.40px;top:416px;font-size:17.60px;letter-spacing:1.001px;color:#fff;font-weight:400;">Down</span>
</div>
</body></html>
